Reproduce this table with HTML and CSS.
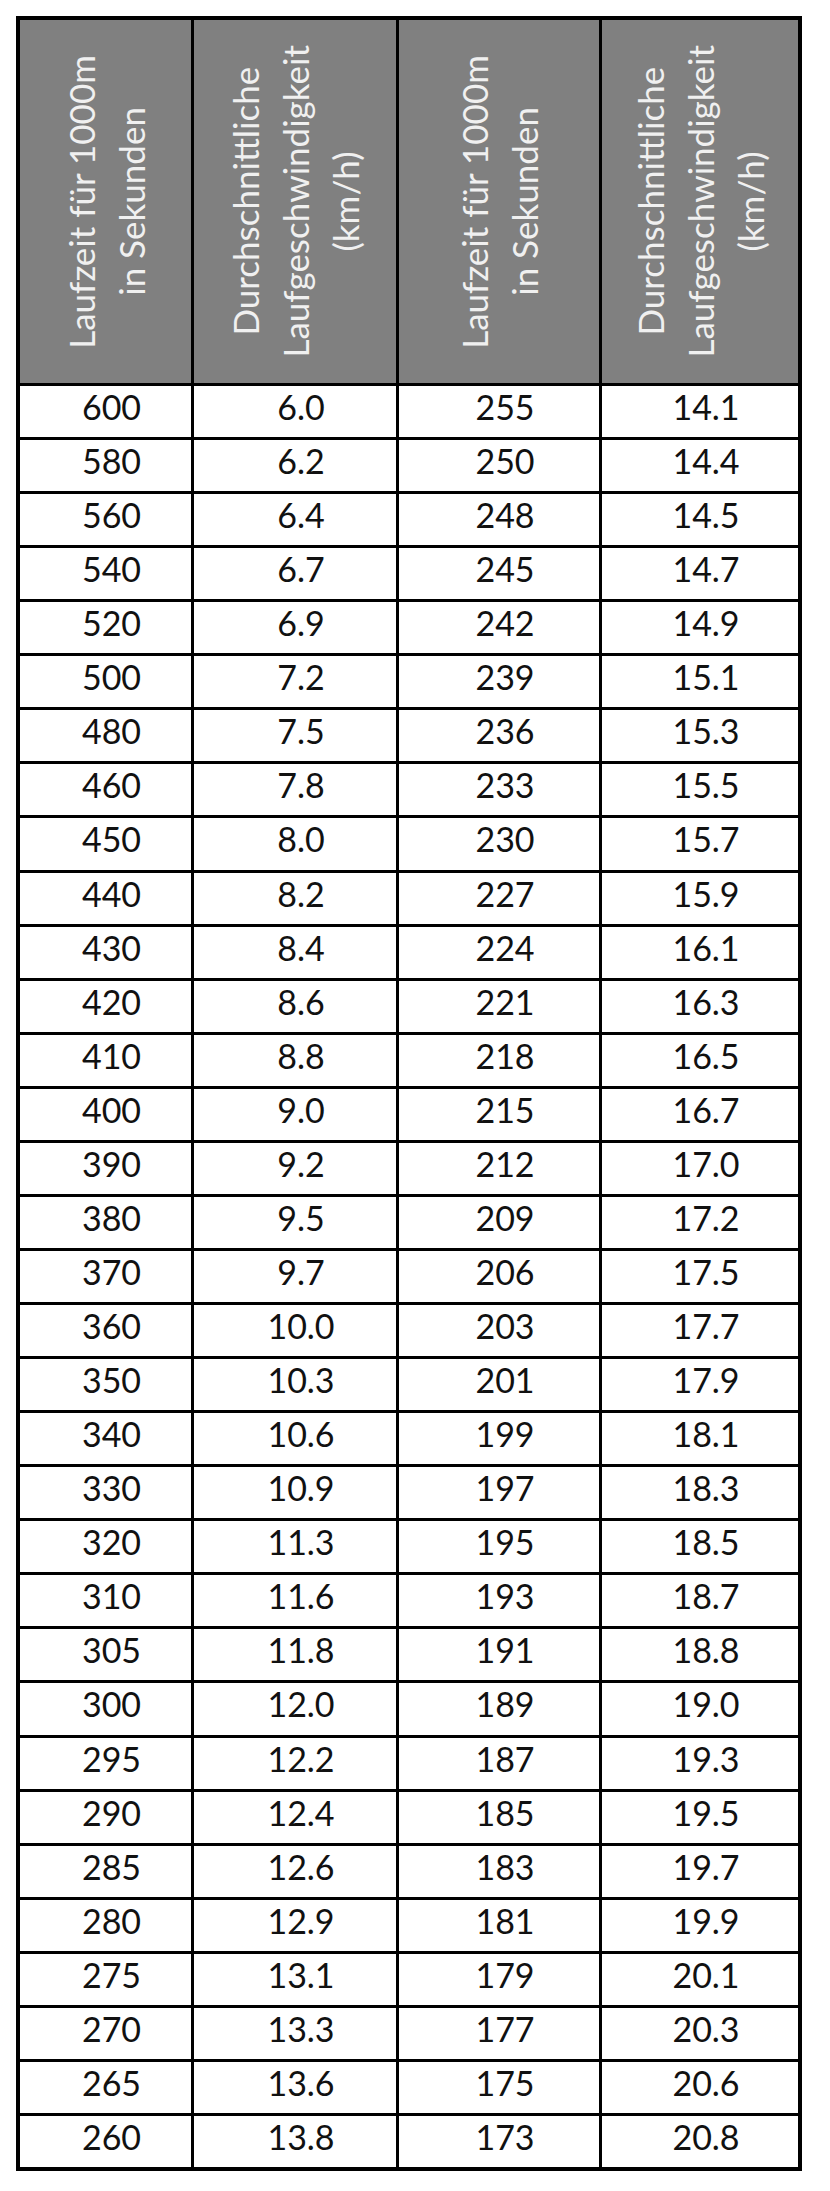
FILE: index.html
```html
<!DOCTYPE html>
<html lang="de">
<head>
<meta charset="utf-8">
<title>Laufzeit und Laufgeschwindigkeit</title>
<link rel="stylesheet" href="styles.css">
</head>
<body>
<div class="sheet" role="table">
  <div class="hcell" role="columnheader"><span class="vtext">Laufzeit für 1000m<br>in Sekunden</span></div>
  <div class="hcell" role="columnheader"><span class="vtext">Durchschnittliche<br>Laufgeschwindigkeit<br>(km/h)</span></div>
  <div class="hcell" role="columnheader"><span class="vtext">Laufzeit für 1000m<br>in Sekunden</span></div>
  <div class="hcell" role="columnheader"><span class="vtext">Durchschnittliche<br>Laufgeschwindigkeit<br>(km/h)</span></div>

  <div class="cell">600</div><div class="cell">6.0</div><div class="cell">255</div><div class="cell">14.1</div>
  <div class="cell">580</div><div class="cell">6.2</div><div class="cell">250</div><div class="cell">14.4</div>
  <div class="cell">560</div><div class="cell">6.4</div><div class="cell">248</div><div class="cell">14.5</div>
  <div class="cell">540</div><div class="cell">6.7</div><div class="cell">245</div><div class="cell">14.7</div>
  <div class="cell">520</div><div class="cell">6.9</div><div class="cell">242</div><div class="cell">14.9</div>
  <div class="cell">500</div><div class="cell">7.2</div><div class="cell">239</div><div class="cell">15.1</div>
  <div class="cell">480</div><div class="cell">7.5</div><div class="cell">236</div><div class="cell">15.3</div>
  <div class="cell">460</div><div class="cell">7.8</div><div class="cell">233</div><div class="cell">15.5</div>
  <div class="cell">450</div><div class="cell">8.0</div><div class="cell">230</div><div class="cell">15.7</div>
  <div class="cell">440</div><div class="cell">8.2</div><div class="cell">227</div><div class="cell">15.9</div>
  <div class="cell">430</div><div class="cell">8.4</div><div class="cell">224</div><div class="cell">16.1</div>
  <div class="cell">420</div><div class="cell">8.6</div><div class="cell">221</div><div class="cell">16.3</div>
  <div class="cell">410</div><div class="cell">8.8</div><div class="cell">218</div><div class="cell">16.5</div>
  <div class="cell">400</div><div class="cell">9.0</div><div class="cell">215</div><div class="cell">16.7</div>
  <div class="cell">390</div><div class="cell">9.2</div><div class="cell">212</div><div class="cell">17.0</div>
  <div class="cell">380</div><div class="cell">9.5</div><div class="cell">209</div><div class="cell">17.2</div>
  <div class="cell">370</div><div class="cell">9.7</div><div class="cell">206</div><div class="cell">17.5</div>
  <div class="cell">360</div><div class="cell">10.0</div><div class="cell">203</div><div class="cell">17.7</div>
  <div class="cell">350</div><div class="cell">10.3</div><div class="cell">201</div><div class="cell">17.9</div>
  <div class="cell">340</div><div class="cell">10.6</div><div class="cell">199</div><div class="cell">18.1</div>
  <div class="cell">330</div><div class="cell">10.9</div><div class="cell">197</div><div class="cell">18.3</div>
  <div class="cell">320</div><div class="cell">11.3</div><div class="cell">195</div><div class="cell">18.5</div>
  <div class="cell">310</div><div class="cell">11.6</div><div class="cell">193</div><div class="cell">18.7</div>
  <div class="cell">305</div><div class="cell">11.8</div><div class="cell">191</div><div class="cell">18.8</div>
  <div class="cell">300</div><div class="cell">12.0</div><div class="cell">189</div><div class="cell">19.0</div>
  <div class="cell">295</div><div class="cell">12.2</div><div class="cell">187</div><div class="cell">19.3</div>
  <div class="cell">290</div><div class="cell">12.4</div><div class="cell">185</div><div class="cell">19.5</div>
  <div class="cell">285</div><div class="cell">12.6</div><div class="cell">183</div><div class="cell">19.7</div>
  <div class="cell">280</div><div class="cell">12.9</div><div class="cell">181</div><div class="cell">19.9</div>
  <div class="cell">275</div><div class="cell">13.1</div><div class="cell">179</div><div class="cell">20.1</div>
  <div class="cell">270</div><div class="cell">13.3</div><div class="cell">177</div><div class="cell">20.3</div>
  <div class="cell">265</div><div class="cell">13.6</div><div class="cell">175</div><div class="cell">20.6</div>
  <div class="cell">260</div><div class="cell">13.8</div><div class="cell">173</div><div class="cell">20.8</div>
</div>
</body>
</html>
```

FILE: styles.css
```css
html, body {
  margin: 0;
  padding: 0;
  background: #ffffff;
}

body {
  font-family: Lato, "Open Sans", "Liberation Sans", sans-serif;
}

.sheet {
  box-sizing: border-box;
  margin: 16px;
  width: 786px;
  height: 2155px;
  padding: 4px;
  background: #000000;
  display: grid;
  grid-template-columns: 171px 202px 200px 196px;
  grid-template-rows: 363px repeat(33, 1fr);
  gap: 3px;
}

.hcell {
  background: #808080;
  display: flex;
  align-items: center;
  justify-content: center;
  overflow: hidden;
}

.vtext {
  writing-mode: vertical-rl;
  transform: rotate(180deg);
  text-align: center;
  color: #f0f0f0;
  font-size: 35px;
  line-height: 50px;
  white-space: nowrap;
}

.cell {
  background: #ffffff;
  color: #111111;
  font-size: 34px;
  line-height: 41px;
  text-align: center;
  padding-left: 12px;
  padding-top: 0;
}
```
